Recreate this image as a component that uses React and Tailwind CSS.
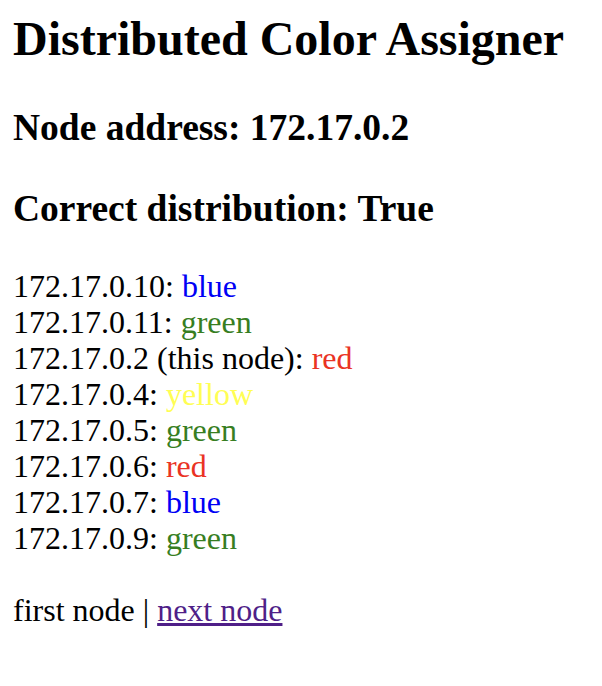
const nodes = [
  { addr: '172.17.0.10', color: 'blue' },
  { addr: '172.17.0.11', color: 'green' },
  { addr: '172.17.0.2 (this node)', color: 'red' },
  { addr: '172.17.0.4', color: 'yellow' },
  { addr: '172.17.0.5', color: 'green' },
  { addr: '172.17.0.6', color: 'red' },
  { addr: '172.17.0.7', color: 'blue' },
  { addr: '172.17.0.9', color: 'green' },
];

const colorClass = {
  blue: 'text-[#0000f5]',
  green: 'text-[#377e22]',
  red: 'text-[#ea3323]',
  yellow: 'text-[#fffe54]',
};

export default function App() {
  return (
    <div className="min-h-screen bg-white text-black pl-[13px] pt-[11px] font-['Liberation_Serif','Times_New_Roman',serif]">
      <h1 className="text-[48px] leading-[56px] font-bold">Distributed Color Assigner</h1>
      <h2 className="mt-[40px] text-[37.5px] leading-[42px] font-bold">Node address: 172.17.0.2</h2>
      <h2 className="mt-[39px] text-[37.5px] leading-[42px] font-bold">Correct distribution: True</h2>

      <div className="mt-[38px] text-[32px] leading-[36px]">
        {nodes.map((n) => (
          <div key={n.addr}>
            {n.addr}: <span className={colorClass[n.color]}>{n.color}</span>
          </div>
        ))}
      </div>

      <p className="mt-[36px] text-[32px] leading-[36px]">
        first node | <a href="#" className="text-[#4f1f88] underline">next node</a>
      </p>
    </div>
  );
}
